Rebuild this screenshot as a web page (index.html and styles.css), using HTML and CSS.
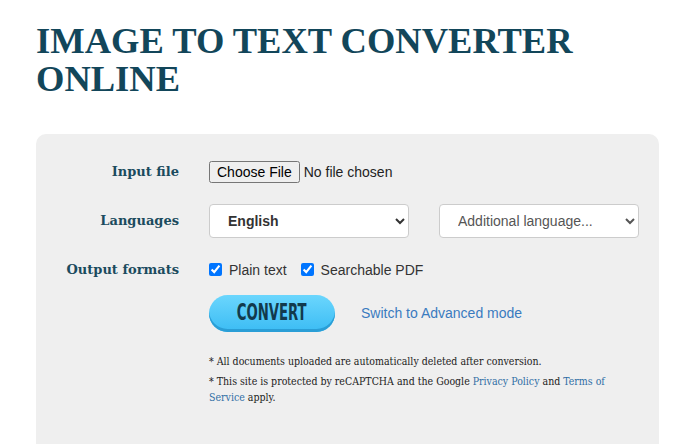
FILE: index.html
```html
<!DOCTYPE html>
<html>
<head>
<meta charset="utf-8">
<link rel="stylesheet" href="styles.css">
</head>
<body>
<main class="page">
  <h1 class="title">IMAGE TO TEXT CONVERTER ONLINE</h1>
  <section class="card">
    <form class="form">
      <label class="label">Input file</label>
      <div class="control">
        <input type="file" class="file">
      </div>

      <label class="label">Languages</label>
      <div class="control selects">
        <select class="select select-main"><option>English</option></select>
        <select class="select"><option>Additional language...</option></select>
      </div>

      <label class="label">Output formats</label>
      <div class="control checks">
        <label class="check"><input type="checkbox" checked> Plain text</label>
        <label class="check"><input type="checkbox" checked> Searchable PDF</label>
      </div>

      <div></div>
      <div class="control actions">
        <button type="button" class="convert"><span class="convert-text">CONVERT</span></button>
        <a class="advanced" href="#">Switch to Advanced mode</a>
      </div>

      <div></div>
      <div class="notes">
        <p>* All documents uploaded are automatically deleted after conversion.</p>
        <p>* This site is protected by reCAPTCHA and the Google <a href="#">Privacy Policy</a> and <a href="#">Terms of</a><br><a href="#">Service</a> apply.</p>
      </div>
    </form>
  </section>
</main>
</body>
</html>
```

FILE: styles.css
```css
html, body {
  margin: 0;
  background: #ffffff;
}
body {
  font-family: "Liberation Sans", Arial, sans-serif;
  font-size: 14px;
  color: #333;
}
.page {
  padding: 22px 24px 0 36px;
}
.title {
  margin: 0;
  font-family: "Liberation Serif", "Times New Roman", serif;
  font-weight: bold;
  font-size: 36.5px;
  line-height: 38px;
  color: #12465a;
  max-width: 580px;
}
.card {
  margin-top: 36px;
  background: #efefef;
  border-radius: 10px 10px 0 0;
  height: 330px;
  padding-top: 13px;
}
.form {
  display: grid;
  grid-template-columns: 143px 430px;
  column-gap: 30px;
  grid-template-rows: 49px 49px 49px 38px auto;
  align-items: center;
}
.label {
  text-align: right;
  font-family: "DejaVu Serif", Georgia, serif;
  font-weight: bold;
  font-size: 13px;
  color: #1b4b5e;
}
.control {
  display: flex;
  align-items: center;
}
.file {
  font-family: "Liberation Sans", Arial, sans-serif;
  font-size: 14px;
  color: #222;
}
.selects {
  gap: 30px;
}
.select {
  width: 200px;
  height: 34px;
  padding: 0 10px 0 14px;
  border: 1px solid #cccccc;
  border-radius: 4px;
  background: #fff;
  font-family: "Liberation Sans", Arial, sans-serif;
  font-size: 14px;
  color: #555;
}
.select-main {
  font-weight: bold;
  color: #333;
}
.checks {
  gap: 14px;
}
.check {
  display: flex;
  align-items: center;
  gap: 4px;
  color: #333;
}
.check input {
  margin: 0 3px 0 0;
  width: 13px;
  height: 13px;
}
.actions {
  gap: 26px;
}
.convert {
  width: 126px;
  height: 37px;
  border: none;
  border-radius: 19px;
  background: linear-gradient(#6bd6fd, #3bbcf4);
  box-shadow: inset 0 -3px 0 #2a9ed6;
  padding: 0 0 2px;
  cursor: pointer;
}
.convert-text {
  display: inline-block;
  font-family: "Liberation Sans Narrow", "DejaVu Sans Condensed", sans-serif;
  font-weight: bold;
  font-size: 23px;
  color: #123a4c;
  transform: scaleX(0.64);
}
.advanced {
  color: #3a7bbf;
  text-decoration: none;
}
.notes {
  padding-top: 21px;
  width: 405px;
  font-family: "DejaVu Serif Condensed", "DejaVu Serif", Georgia, serif;
  font-size: 10.5px;
  line-height: 16px;
  color: #222;
}
.notes p {
  margin: 0 0 4px;
}
.notes a {
  color: #2f6ea5;
  text-decoration: none;
}
```
